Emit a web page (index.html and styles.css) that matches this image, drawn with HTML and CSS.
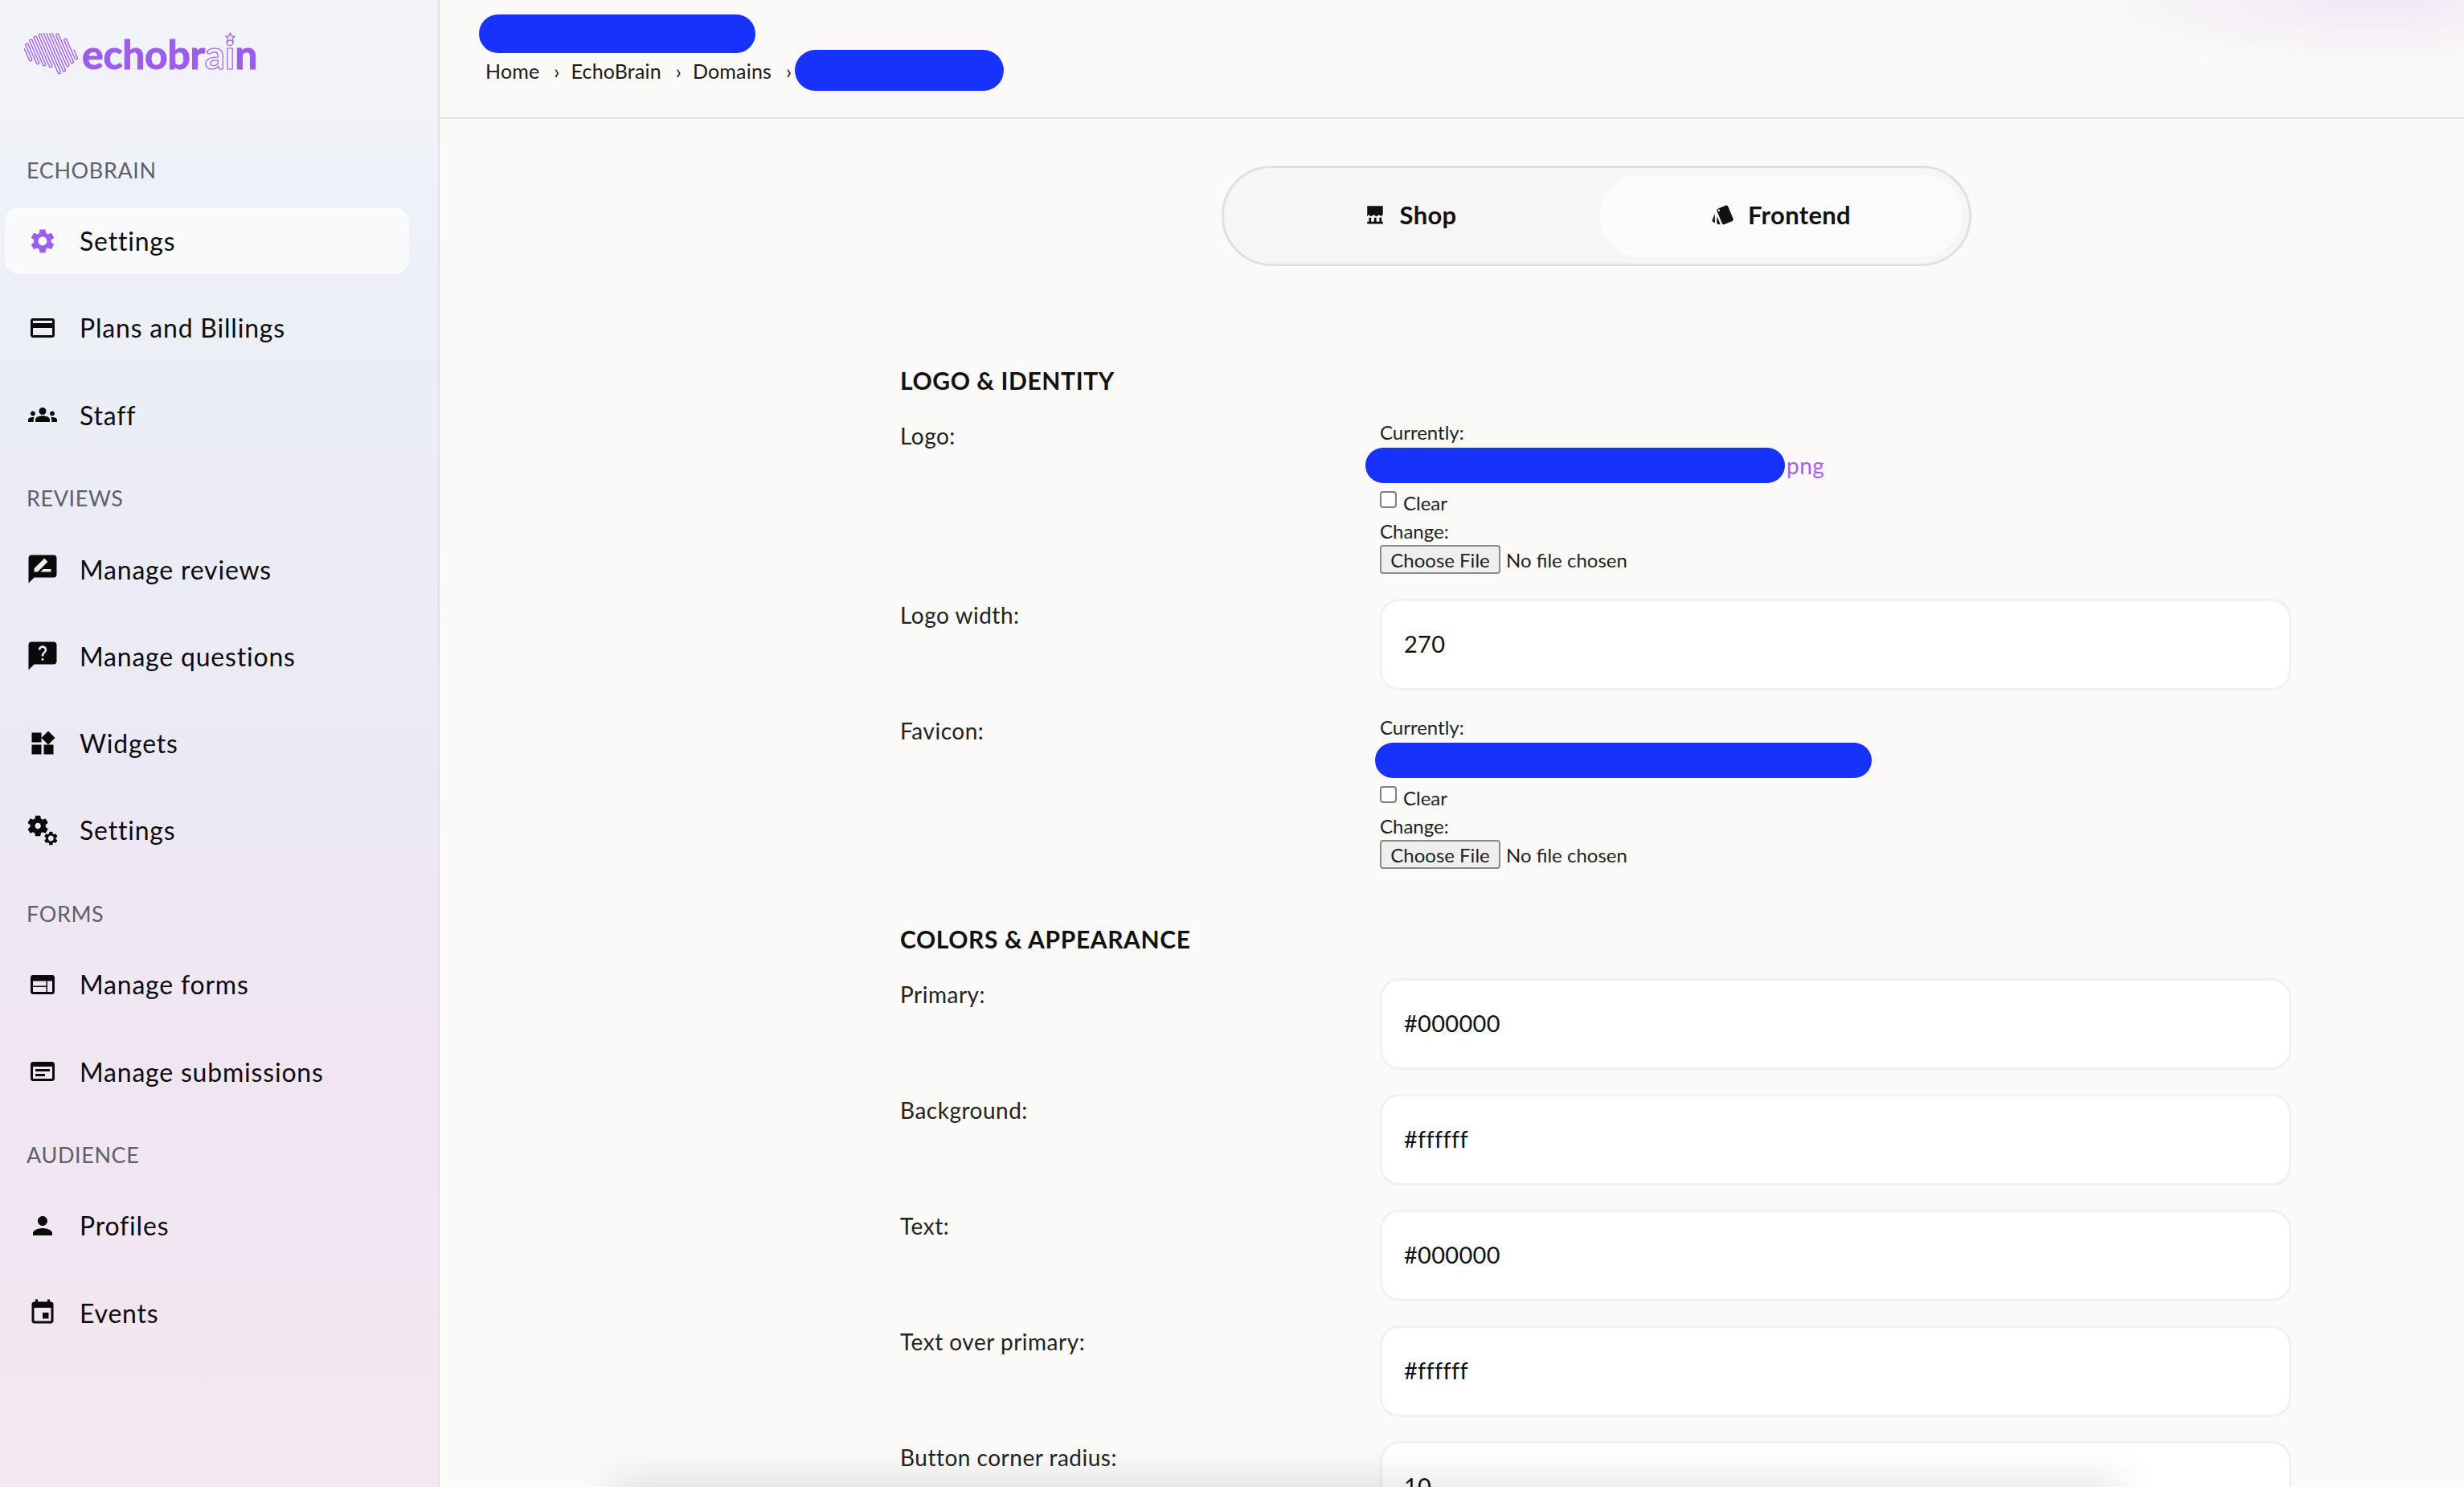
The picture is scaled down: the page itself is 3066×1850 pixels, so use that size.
FILE: index.html
```html
<!DOCTYPE html>
<html lang="en">
<head>
<meta charset="utf-8">
<title>EchoBrain Settings</title>
<link rel="stylesheet" href="styles.css">
</head>
<body>
<div class="app">
  <aside class="sidebar">
    <a class="logo">
      <svg class="logo-mark" viewBox="0 0 72 52" width="72" height="52" fill="none" stroke="#9d5cf0" stroke-width="1.3" stroke-linecap="round">
        <path d="M3.4 20L9.12 33A1.8 1.8 0 0 0 12.72 33L4.8 15A1.8 1.8 0 0 1 8.4 15L18.08 37A1.8 1.8 0 0 0 21.68 37L9.8 10A1.8 1.8 0 0 1 13.4 10L26.16 39A1.8 1.8 0 0 0 29.76 39L15.24 6A1.8 1.8 0 0 1 18.84 6L34.24 41A1.8 1.8 0 0 0 37.84 41L21.12 3A1.8 1.8 0 0 1 24.72 3L44.96 49A1.8 1.8 0 0 0 48.56 49L27.44 1A1.8 1.8 0 0 1 31.04 1L50.84 46A1.8 1.8 0 0 0 54.44 46L34.64 1A1.8 1.8 0 0 1 38.24 1L55.4 40A1.8 1.8 0 0 0 59 40L42.72 3A1.8 1.8 0 0 1 46.32 3L60.84 36A1.8 1.8 0 0 0 64.44 36L52.56 9A1.8 1.8 0 0 1 56.16 9L65.84 31A1.8 1.8 0 0 0 69.44 31L65.04 21"/>
      </svg>
      <span class="logo-text">echobr<span class="logo-outline">a<span class="logo-i">i<svg class="logo-star" viewBox="0 0 24 24" width="13" height="13" fill="#f1f3f8" stroke="#9d5cf0" stroke-width="2.2"><path d="M12 2l3 7 7.500.6-5.700 4.800 1.800 7.300L12 17.800 5.400 21.700l1.800-7.300L1.500 9.600 9 9z"/></svg></span></span>n</span>
    </a>

    <nav class="nav">
      <div class="nav-label">ECHOBRAIN</div>
      <ul class="nav-list">
        <li class="nav-item is-active"><svg class="nav-icon" viewBox="0 0 24 24"><path d="M19.14 12.94c.04-.3.06-.61.06-.94 0-.32-.02-.64-.07-.94l2.03-1.58c.18-.14.23-.41.12-.61l-1.92-3.32c-.12-.22-.37-.29-.59-.22l-2.39.96c-.5-.38-1.03-.7-1.62-.94l-.36-2.54c-.04-.24-.24-.41-.48-.41h-3.84c-.24 0-.43.17-.47.41l-.36 2.54c-.59.24-1.13.57-1.62.94l-2.39-.96c-.22-.08-.47 0-.59.22L2.74 8.87c-.12.21-.08.47.12.61l2.03 1.58c-.05.3-.09.63-.09.94s.02.64.07.94l-2.03 1.58c-.18.14-.23.41-.12.61l1.92 3.32c.12.22.37.29.59.22l2.39-.96c.5.38 1.03.7 1.62.94l.36 2.54c.05.24.24.41.48.41h3.84c.24 0 .44-.17.47-.41l.36-2.54c.59-.24 1.13-.56 1.62-.94l2.39.96c.22.08.47 0 .59-.22l1.92-3.32c.12-.22.07-.47-.12-.61l-2.01-1.58zM12 15.6c-1.98 0-3.6-1.62-3.6-3.6s1.62-3.6 3.6-3.6 3.6 1.62 3.6 3.6-1.62 3.6-3.600 3.6z"/></svg>Settings</li>
        <li class="nav-item"><svg class="nav-icon" viewBox="0 0 24 24"><path d="M20 4H4c-1.11 0-1.99.89-1.99 2L2 18c0 1.11.89 2 2 2h16c1.11 0 2-.89 2-2V6c0-1.11-.89-2-2-2zm0 14H4v-6h16v6zm0-10H4V6h16v2z"/></svg>Plans and Billings</li>
        <li class="nav-item"><svg class="nav-icon" viewBox="0 0 24 24"><path d="M4,13c1.1,0,2-0.9,2-2c0-1.1-0.9-2-2-2s-2,0.9-2,2C2,12.1,2.9,13,4,13z M5.13,14.1C4.76,14.04,4.39,14,4,14c-0.99,0-1.93,0.21-2.78,0.58C0.48,14.9,0,15.62,0,16.43V18l4.5,0v-1.61C4.5,15.56,4.73,14.78,5.13,14.1z M20,13c1.1,0,2-0.9,2-2c0-1.1-0.9-2-2-2s-2,0.9-2,2C18,12.1,18.9,13,20,13z M24,16.43c0-0.81-0.48-1.53-1.22-1.85C21.93,14.21,20.99,14,20,14c-0.39,0-0.76,0.04-1.13,0.1c0.4,0.68,0.63,1.46,0.63,2.29V18l4.5,0V16.43z M16.24,13.65c-1.17-0.52-2.61-0.9-4.24-0.9c-1.63,0-3.07,0.39-4.24,0.9C6.68,14.13,6,15.21,6,16.39V18h12v-1.61C18,15.21,17.32,14.13,16.24,13.65z M12,12c1.66,0,3-1.34,3-3c0-1.66-1.34-3-3-3S9,7.34,9,9C9,10.66,10.34,12,12,12z"/></svg>Staff</li>
      </ul>

      <div class="nav-label">REVIEWS</div>
      <ul class="nav-list">
        <li class="nav-item"><svg class="nav-icon nav-icon-bubble" viewBox="0 0 24 24"><path d="M20 2H4c-1.1 0-1.99.9-1.990 2L2 22l4-4h14c1.100 0 2-.9 2-2V4c0-1.100-.9-2-2-2zM6 14v-2.470l6.880-6.880c.2-.2.51-.2.71 0l1.770 1.770c.2.2.2.51 0 .71L8.470 14H6zm12 0h-7.500l2-2H18v2z"/></svg>Manage reviews</li>
        <li class="nav-item"><svg class="nav-icon nav-icon-bubble" viewBox="0 0 24 24"><path d="M20 2H4c-1.100 0-1.990.9-1.990 2L2 22l4-4h14c1.100 0 2-.9 2-2V4c0-1.100-.9-2-2-2z"/><path class="question-glyph" transform="translate(3 1.750) scale(.75)" d="M13 18h-2v-2h2v2zm2.070-7.750l-.9.92C13.450 11.900 13 12.500 13 14h-2v-.5c0-1.100.45-2.100 1.170-2.830l1.240-1.260c.37-.36.59-.86.59-1.410 0-1.100-.9-2-2-2s-2 .9-2 2H8c0-2.210 1.790-4 4-4s4 1.790 4 4c0 .88-.36 1.680-.93 2.250z"/></svg>Manage questions</li>
        <li class="nav-item"><svg class="nav-icon" viewBox="0 0 24 24"><path d="M13 13v8h8v-8h-8zM3 21h8v-8H3v8zM3 3v8h8V3H3zm13.660-1.310L11 7.340 16.660 13l5.660-5.660-5.660-5.650z"/></svg>Widgets</li>
        <li class="nav-item"><svg class="nav-icon nav-icon-wide" viewBox="0 0 24 24"><path d="M14.170,13.710l1.400-2.420c0.090-0.150,0.050-0.340-0.080-0.450l-1.480-1.160c0.030-0.220,0.050-0.450,0.050-0.680s-0.020-0.460-0.050-0.690l1.480-1.160c0.130-0.110,0.170-0.300,0.080-0.450l-1.400-2.420c-0.090-0.150-0.270-0.210-0.430-0.150L12,4.830c-0.360-0.280-0.750-0.510-1.180-0.690l-0.260-1.850C10.530,2.130,10.380,2,10.210,2h-2.800C7.240,2,7.090,2.130,7.060,2.300L6.800,4.150C6.380,4.330,5.980,4.560,5.620,4.840l-1.740-0.700c-0.160-0.060-0.340,0-0.430,0.150l-1.400,2.420C1.960,6.860,2,7.050,2.130,7.160l1.480,1.160C3.580,8.540,3.560,8.770,3.560,9s0.020,0.460,0.050,0.690l-1.480,1.160C2,10.960,1.960,11.150,2.050,11.300l1.400,2.420c0.090,0.150,0.270,0.210,0.430,0.150l1.740-0.700c0.360,0.280,0.750,0.510,1.180,0.690l0.260,1.850C7.090,15.870,7.240,16,7.410,16h2.800c0.170,0,0.320-0.130,0.350-0.300l0.260-1.850c0.420-0.180,0.820-0.410,1.180-0.690l1.740,0.700C13.900,13.920,14.080,13.860,14.170,13.710z M8.810,11c-1.100,0-2-0.900-2-2c0-1.100,0.900-2,2-2s2,0.900,2,2C10.810,10.100,9.910,11,8.810,11z"/><path d="M21.920,18.670l-0.960-0.740c0.020-0.140,0.040-0.290,0.040-0.440c0-0.150-0.010-0.300-0.040-0.440l0.950-0.740c0.080-0.070,0.110-0.190,0.050-0.290l-0.900-1.550c-0.050-0.100-0.170-0.130-0.280-0.100l-1.110,0.450c-0.230-0.180-0.480-0.330-0.760-0.440l-0.170-1.180C18.730,13.080,18.630,13,18.530,13h-1.790c-0.110,0-0.210,0.080-0.220,0.190l-0.170,1.180c-0.270,0.120-0.530,0.260-0.760,0.440l-1.110-0.450c-0.100-0.040-0.220,0-0.280,0.100l-0.900,1.550c-0.050,0.100-0.040,0.220,0.050,0.290l0.950,0.740c-0.020,0.140-0.030,0.290-0.030,0.440c0,0.150,0.010,0.300,0.030,0.440l-0.950,0.740c-0.080,0.070-0.110,0.190-0.050,0.290l0.900,1.550c0.050,0.100,0.170,0.130,0.280,0.100l1.110-0.450c0.230,0.180,0.480,0.330,0.760,0.440l0.170,1.180c0.020,0.110,0.110,0.190,0.220,0.190h1.790c0.110,0,0.210-0.080,0.220-0.190l0.170-1.180c0.270-0.120,0.530-0.260,0.750-0.440l1.120,0.450c0.100,0.040,0.220,0,0.280-0.100l0.900-1.550C22.030,18.860,22,18.740,21.920,18.670z M17.630,19.330c-1.030,0-1.870-0.840-1.870-1.870c0-1.030,0.840-1.870,1.870-1.870s1.870,0.840,1.870,1.870C19.500,18.490,18.660,19.330,17.630,19.330z"/></svg>Settings</li>
      </ul>

      <div class="nav-label">FORMS</div>
      <ul class="nav-list">
        <li class="nav-item"><svg class="nav-icon" viewBox="0 0 24 24"><path d="M20 4H4c-1.100 0-1.990.9-1.990 2L2 18c0 1.100.9 2 2 2h16c1.100 0 2-.9 2-2V6c0-1.100-.9-2-2-2zm-5 14H4v-4h11v4zm0-5H4V9h11v4zm5 5h-4V9h4v9z"/></svg>Manage forms</li>
        <li class="nav-item"><svg class="nav-icon" viewBox="0 0 24 24"><path d="M20 4H4c-1.100 0-2 .9-2 2v12c0 1.100.9 2 2 2h16c1.100 0 2-.9 2-2V6c0-1.100-.9-2-2-2zm0 14H4V8h16v10zM6 10h12v2H6zm0 4h8v2H6z"/></svg>Manage submissions</li>
      </ul>

      <div class="nav-label">AUDIENCE</div>
      <ul class="nav-list">
        <li class="nav-item"><svg class="nav-icon" viewBox="0 0 24 24"><path d="M12 12c2.210 0 4-1.790 4-4s-1.790-4-4-4-4 1.790-4 4 1.790 4 4 4zm0 2c-2.670 0-8 1.340-8 4v2h16v-2c0-2.660-5.330-4-8-4z"/></svg>Profiles</li>
        <li class="nav-item"><svg class="nav-icon" viewBox="0 0 24 24"><path d="M17 12h-5v5h5v-5zM16 1v2H8V1H6v2H5c-1.110 0-1.990.9-1.990 2L3 19c0 1.100.89 2 2 2h14c1.100 0 2-.9 2-2V5c0-1.100-.9-2-2-2h-1V1h-2zm3 18H5V8h14v11z"/></svg>Events</li>
      </ul>
    </nav>
  </aside>

  <main class="main">
    <header class="topbar">
      <div class="redact redact-title"></div>
      <ol class="crumbs">
        <li class="crumb">Home</li>
        <li class="crumb">EchoBrain</li>
        <li class="crumb">Domains</li>
        <li class="crumb crumb-last"><span class="redact redact-crumb"></span></li>
      </ol>
    </header>

    <div class="content">
      <div class="tabs">
        <button class="tab tab-shop"><svg class="tab-icon tab-icon-shop" viewBox="0 0 24 24"><path d="M3 2h18v9l-1.500 3-3-1.800-3 1.800-3-1.800-3 1.800-3-1.800L3 14z"/><path d="M3 20h18v2.500H3zM5 15.500h2.500V20H5zM11 15.500h2.500V20H11zM17 15.500h2.500V20H17z"/></svg>Shop</button>
        <button class="tab is-active"><svg class="tab-icon" viewBox="0 0 24 24"><path d="M2.530 19.650l1.340.56v-9.030l-2.430 5.860c-.41 1.020.08 2.190 1.090 2.610zm19.500-3.700L17.070 3.980c-.31-.75-1.040-1.210-1.810-1.230-.26 0-.53.04-.79.15L7.100 5.950c-.75.31-1.210 1.030-1.230 1.800-.01.27.04.54.15.8l4.960 11.970c.31.76 1.050 1.220 1.830 1.230.26 0 .52-.05.77-.15l7.360-3.050c1.020-.42 1.510-1.590 1.090-2.600zM7.880 8.750c-.55 0-1-.45-1-1s.45-1 1-1 1 .45 1 1-.45 1-1 1zm-2 11c0 1.100.9 2 2 2h1.450l-3.450-8.340v6.340z"/></svg>Frontend</button>
      </div>

      <form class="form">
        <section class="form-section">
          <h2 class="form-heading">LOGO &amp; IDENTITY</h2>
          <div class="form-row">
            <label class="form-label">Logo:</label>
            <div class="file-field">
              <div class="file-line">Currently:</div>
              <div class="file-link"><span class="redact redact-logo"></span><a class="file-ext">png</a></div>
              <label class="file-clear"><input class="check" type="checkbox">Clear</label>
              <div class="file-line file-change">Change:</div>
              <input class="file-input" type="file">
            </div>
          </div>
          <div class="form-row">
            <label class="form-label">Logo width:</label>
            <input class="text-input" type="text" value="270">
          </div>
          <div class="form-row">
            <label class="form-label">Favicon:</label>
            <div class="file-field">
              <div class="file-line">Currently:</div>
              <div class="file-link"><span class="redact redact-favicon"></span></div>
              <label class="file-clear"><input class="check" type="checkbox">Clear</label>
              <div class="file-line file-change">Change:</div>
              <input class="file-input" type="file">
            </div>
          </div>
        </section>

        <section class="form-section">
          <h2 class="form-heading">COLORS &amp; APPEARANCE</h2>
          <div class="form-row">
            <label class="form-label">Primary:</label>
            <input class="text-input" type="text" value="#000000">
          </div>
          <div class="form-row">
            <label class="form-label">Background:</label>
            <input class="text-input" type="text" value="#ffffff">
          </div>
          <div class="form-row">
            <label class="form-label">Text:</label>
            <input class="text-input" type="text" value="#000000">
          </div>
          <div class="form-row">
            <label class="form-label">Text over primary:</label>
            <input class="text-input" type="text" value="#ffffff">
          </div>
          <div class="form-row">
            <label class="form-label">Button corner radius:</label>
            <input class="text-input" type="text" value="10">
          </div>
        </section>
      </form>
    </div>

    <div class="glow-top"></div>
    <div class="glow-bottom"></div>
  </main>
</div>
</body>
</html>
```

FILE: styles.css
```css
* { box-sizing: border-box; }
html, body { margin: 0; height: 100%; }
body {
  font-family: "Lato", "Noto Sans", sans-serif;
  color: #111;
  background: #fbfaf8;
  overflow: hidden;
}
.app { display: flex; height: 1850px; overflow: hidden; }

/* Sidebar */
.sidebar {
  width: 547px;
  flex: none;
  border-right: 2px solid #dfdfe6;
  background: linear-gradient(180deg, #f2f4f9 0%, #eceef7 27%, #ebe9f5 50%, #f0e6f2 72%, #f3e7f0 100%);
}
.logo { display: flex; align-items: flex-start; height: 193px; padding: 41px 0 0 27px; }
.logo-mark { flex: none; }
.logo-text {
  position: relative;
  margin: 1px 0 0 3px;
  font-weight: 700;
  font-size: 50px;
  line-height: 50px;
  letter-spacing: -0.3px;
  color: #9d5cf0;
  -webkit-text-stroke: 1px #9d5cf0;
}
.logo-outline { color: transparent; -webkit-text-stroke: 1.2px #9d5cf0; }
.logo-i { position: relative; }
.logo-star { position: absolute; top: 3px; left: 0; }

.nav { display: flex; flex-direction: column; }
.nav-label {
  height: 38px;
  line-height: 38px;
  padding-left: 33px;
  font-size: 27px;
  letter-spacing: 0.6px;
  color: #5f6068;
}
.nav-list {
  list-style: none;
  margin: 27px 0 43.5px;
  padding: 0 0 0 6px;
  display: flex;
  flex-direction: column;
  gap: 25px;
}
.nav-item {
  display: flex;
  align-items: center;
  gap: 28px;
  width: 503px;
  height: 83.3px;
  padding-left: 29px;
  border-radius: 18px;
  font-size: 32px;
  letter-spacing: 0.8px;
  color: #0c0c0c;
}
.nav-item.is-active { background: #f9fafc; }
.nav-icon { width: 36px; height: 36px; flex: none; fill: #0a0a0a; }
.is-active .nav-icon { fill: #9b5cf0; }
.nav-icon-wide { width: 44px; height: 44px; margin: 0 -4px; }
.nav-icon-bubble { width: 42px; height: 42px; margin: 0 -3px; }
.question-glyph { fill: #eaeaf6; }

/* Main */
.main { position: relative; flex: 1; min-width: 0; }
.topbar {
  height: 148px;
  padding: 18px 0 0 49px;
  border-bottom: 2px solid #e6e5e3;
}
.redact { display: block; background: #1733fb; border-radius: 999px; }
.redact-title { width: 344px; height: 48px; }
.crumbs {
  display: flex;
  list-style: none;
  margin: 4px 0 0 8px;
  padding: 0;
  font-size: 25px;
  line-height: 36px;
  letter-spacing: 0.2px;
  color: #1a1a1a;
}
.crumb { position: relative; margin-right: 39px; }
.crumb:not(:last-child)::after {
  content: "\203A";
  position: absolute;
  right: -25px;
}
.crumb-last { position: relative; margin: 0; }
.redact-crumb { position: absolute; top: -8px; left: -10px; width: 260px; height: 51px; }

.content { padding: 58px 213px 0 573px; }

.tabs {
  display: grid;
  grid-template-columns: 1fr 452px;
  width: 933px;
  height: 125px;
  margin: 0 auto;
  padding: 9px 8px 9px 9px;
  border: 3px solid #e2e0e0;
  border-radius: 62px;
  background: #f7f5f6;
}
.tab {
  display: flex;
  align-items: center;
  justify-content: center;
  gap: 16px;
  padding: 0 0 3px;
  border: 0;
  border-radius: 52px;
  background: none;
  font: 700 31px "Lato", sans-serif;
  letter-spacing: 0.3px;
  color: #111;
}
.tab.is-active { background: #fbfbfb; }
.tab-shop { gap: 18px; padding-right: 12px; }
.tab-icon { width: 30px; height: 30px; fill: #111; }
.tab-icon-shop { width: 26px; height: 26px; }

.form { display: flex; flex-direction: column; gap: 66px; margin: 122px 2px 0 0; }
.form-section { display: flex; flex-direction: column; gap: 30px; }
.form-heading {
  margin: 0 0 -1px;
  font-size: 30px;
  line-height: 40px;
  font-weight: 700;
  letter-spacing: 0.6px;
  color: #111;
}
.form-row { display: grid; grid-template-columns: 597px 1fr; align-items: start; }
.form-label { font-size: 28px; line-height: 41px; letter-spacing: 0.5px; color: #222; }

.file-field { display: flex; flex-direction: column; align-items: flex-start; height: 193px; font-size: 24px; color: #222; }
.file-line { height: 32px; line-height: 32px; }
.file-change { margin-top: 3px; }
.file-link { display: flex; align-items: center; height: 44px; margin-top: 3px; }
.file-ext { font-size: 28px; letter-spacing: 0.5px; color: #a45ef0; margin-left: 2px; }
.redact-logo { width: 522px; height: 44px; margin-left: -18px; }
.redact-favicon { width: 618px; height: 44px; margin-left: -6px; }
.file-clear { display: flex; align-items: flex-start; gap: 8px; height: 32px; margin-top: 9px; line-height: 32px; }
.check {
  appearance: none;
  width: 21px;
  height: 21px;
  margin: 1px 0 0;
  border: 2px solid #808080;
  border-radius: 4px;
  background: #fff;
}
.file-input { margin-top: 1px; height: 36px; font: 24px "Lato", sans-serif; color: #222; }
.file-input::file-selector-button {
  height: 36px;
  width: 150px;
  margin-right: 7px;
  padding: 0;
  border: 2px solid #8a8a8a;
  border-radius: 4px;
  background: #efefef;
  font: 24px "Lato", sans-serif;
  color: #222;
}
.text-input {
  width: 100%;
  height: 114px;
  padding: 0 27px 3px;
  border: 3px solid #f2f1f0;
  border-radius: 24px;
  background: #fff;
  font: 29px "Lato", sans-serif;
  letter-spacing: 0.3px;
  color: #111;
  outline: none;
}

/* Soft blurred artefacts over the page */
.glow-top {
  position: absolute;
  top: 0;
  right: 0;
  width: 560px;
  height: 85px;
  background: radial-gradient(ellipse 70% 100% at 80% 0, #f0e9f6 0%, rgba(240, 233, 246, 0) 100%);
  pointer-events: none;
}
.glow-bottom {
  position: absolute;
  left: 225px;
  right: 438px;
  bottom: -40px;
  height: 40px;
  box-shadow: 0 0 50px 12px rgba(0, 0, 0, 0.1);
  pointer-events: none;
}
```
